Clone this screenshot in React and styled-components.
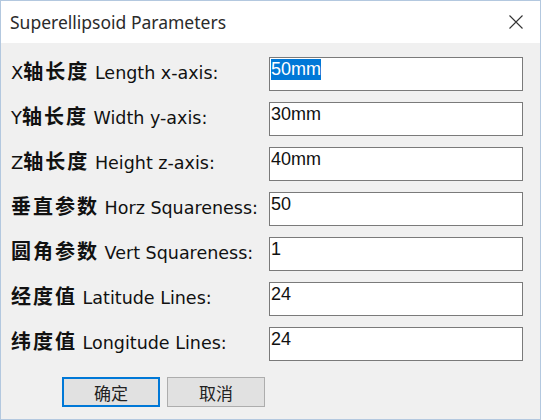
import React, {useEffect, useRef} from "react";
import styled, {createGlobalStyle} from "styled-components";

const latin = `"DejaVu Sans", "Noto Sans CJK SC", sans-serif`;
const hanFont = `"Noto Sans CJK SC", "DejaVu Sans", sans-serif`;
const accent = "#0078d7";

const GlobalStyle = createGlobalStyle`
	html, body{
		margin:0;
		padding:0;
		background:#f0f0f0;
	}
	*{
		box-sizing:border-box;
	}
`;

const Window = styled.div`
	width:541px;
	height:420px;
	border:1px solid #b3c8df;
	background:#f0f0f0;
	display:flex;
	flex-direction:column;
	overflow:hidden;
`;

const TitleBar = styled.div`
	height:42px;
	flex:none;
	background:#fff;
	display:flex;
	align-items:center;
	justify-content:space-between;
	padding:0 14px 0 9px;
	font-family:"Noto Sans", "Open Sans", sans-serif;
	font-size:17.5px;
	color:#2b2b2b;
`;

const CloseButton = styled.button`
	border:none;
	background:transparent;
	padding:0;
	width:20px;
	height:20px;
	display:flex;
	align-items:center;
	justify-content:center;
	svg{
		display:block;
	}
`;

const Body = styled.div`
	flex:1;
	padding:14px 17px 0 10px;
	display:flex;
	flex-direction:column;
	gap:11px;
`;

const Row = styled.div`
	display:flex;
	align-items:center;
	height:34px;
`;

const Label = styled.label`
	width:258px;
	flex:none;
	font-family:${latin};
	font-size:17.5px;
	color:#111;
	white-space:nowrap;
	margin-top:-8px;
`;

const Han = styled.span`
	font-family:${hanFont};
	font-size:20px;
	font-weight:700;
	letter-spacing:2px;
	.lat{
		font-family:${latin};
		font-weight:400;
		font-size:18px;
		letter-spacing:0;
	}
`;

const Field = styled.input`
	flex:1;
	height:34px;
	border:1px solid #7a7a7a;
	background:#fff;
	padding:1px 2px 10px 1px;
	font-family:"Liberation Sans", Arial, sans-serif;
	font-size:18px;
	line-height:21px;
	color:#111;
	outline:none;
	&::selection{
		background:${accent};
		color:#fff;
	}
`;

const Buttons = styled.div`
	display:flex;
	gap:7px;
	padding:5px 0 0 51px;
`;

const Button = styled.button`
	width:98px;
	height:30px;
	background:#e1e1e1;
	border:${p => p.$primary ? `2px solid ${accent}` : "1px solid #adadad"};
	font-family:${hanFont};
	font-size:17px;
	color:#222;
	padding:0;
`;

const fields = [
	{pre:"X", han:"轴长度", en:"Length x-axis:", value:"50mm"},
	{pre:"Y", han:"轴长度", en:"Width y-axis:", value:"30mm"},
	{pre:"Z", han:"轴长度", en:"Height z-axis:", value:"40mm"},
	{han:"垂直参数", en:"Horz Squareness:", value:"50"},
	{han:"圆角参数", en:"Vert Squareness:", value:"1"},
	{han:"经度值", en:"Latitude Lines:", value:"24"},
	{han:"纬度值", en:"Longitude Lines:", value:"24"},
];

const App = ()=>{
	const first = useRef(null);

	useEffect(()=>{
		if(first.current){
			first.current.focus();
			first.current.select();
		}
	}, []);

	return(
	<>
		<GlobalStyle/>
		<Window>
			<TitleBar>
				<span>Superellipsoid Parameters</span>
				<CloseButton aria-label="Close">
					<svg width="14" height="14" viewBox="0 0 14 14">
						<path d="M0.5 0.5L13.5 13.5M13.5 0.5L0.5 13.5" stroke="#333" strokeWidth="1.1" fill="none"/>
					</svg>
				</CloseButton>
			</TitleBar>
			<Body>
				{fields.map((f, i)=>(
					<Row key={i}>
						<Label>
							<Han>{f.pre && <span className="lat">{f.pre}</span>}{f.han}</Han>
							{" "}{f.en}
						</Label>
						<Field ref={i === 0 ? first : undefined} defaultValue={f.value}/>
					</Row>
				))}
				<Buttons>
					<Button $primary>确定</Button>
					<Button>取消</Button>
				</Buttons>
			</Body>
		</Window>
	</>
	);
}

export default App;
